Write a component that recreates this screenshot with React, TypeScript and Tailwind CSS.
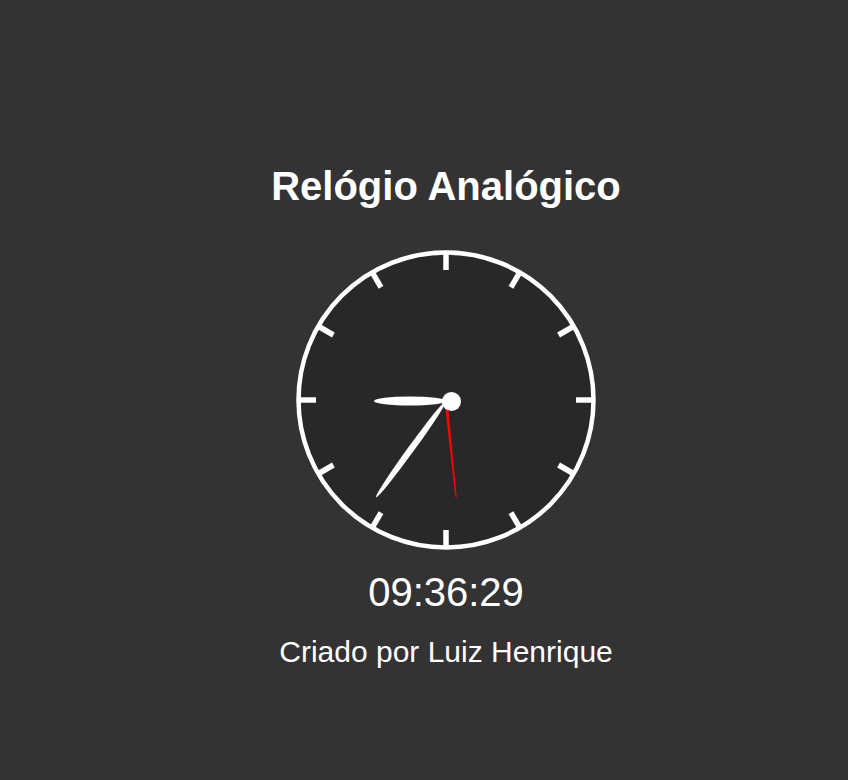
import React from "react";

const ticks = Array.from({ length: 12 }, (_, i) => i * 30);

function Clock() {
  const cx = 150;
  const cy = 150;

  return (
    <svg width="300" height="300" viewBox="0 0 300 300" className="block">
      <circle cx={cx} cy={cy} r={147.5} fill="#282828" stroke="#ffffff" strokeWidth={4.5} />

      {ticks.map((deg) => {
        const a = (deg * Math.PI) / 180;
        const x1 = cx + Math.sin(a) * 146;
        const y1 = cy - Math.cos(a) * 146;
        const x2 = cx + Math.sin(a) * 130;
        const y2 = cy - Math.cos(a) * 130;
        return (
          <line key={deg} x1={x1} y1={y1} x2={x2} y2={y2} stroke="#ffffff" strokeWidth={5.5} />
        );
      })}

      {/* hour */}
      <g transform="translate(150 151) rotate(270)">
        <ellipse cx={0} cy={-36} rx={4.5} ry={36} fill="#ffffff" />
      </g>

      {/* minute */}
      <g transform="translate(150 151) rotate(216)">
        <ellipse cx={0} cy={-59} rx={3.2} ry={60} fill="#ffffff" />
      </g>

      {/* second */}
      <g transform="translate(150 151) rotate(174)">
        <polygon points="-1.6,0 1.6,0 0.6,-97 -0.6,-97" fill="#ff0000" />
      </g>

      <circle cx={155.5} cy={151.5} r={9.5} fill="#ffffff" />
    </svg>
  );
}

export default function App() {
  return (
    <main
      className="flex min-h-screen flex-col items-center bg-[#333333] pl-[44px] pt-[164px] text-white"
      style={{ fontFamily: '"Liberation Sans", Arial, sans-serif' }}
    >
      <h1 className="text-[40px] font-bold leading-[45px]">Relógio Analógico</h1>

      <div className="mt-[41px]">
        <Clock />
      </div>

      <p className="mt-[19px] text-[40px] leading-[46px]">09:36:29</p>

      <p className="mt-[20px] text-[30px] leading-[34px]">Criado por Luiz Henrique</p>
    </main>
  );
}
